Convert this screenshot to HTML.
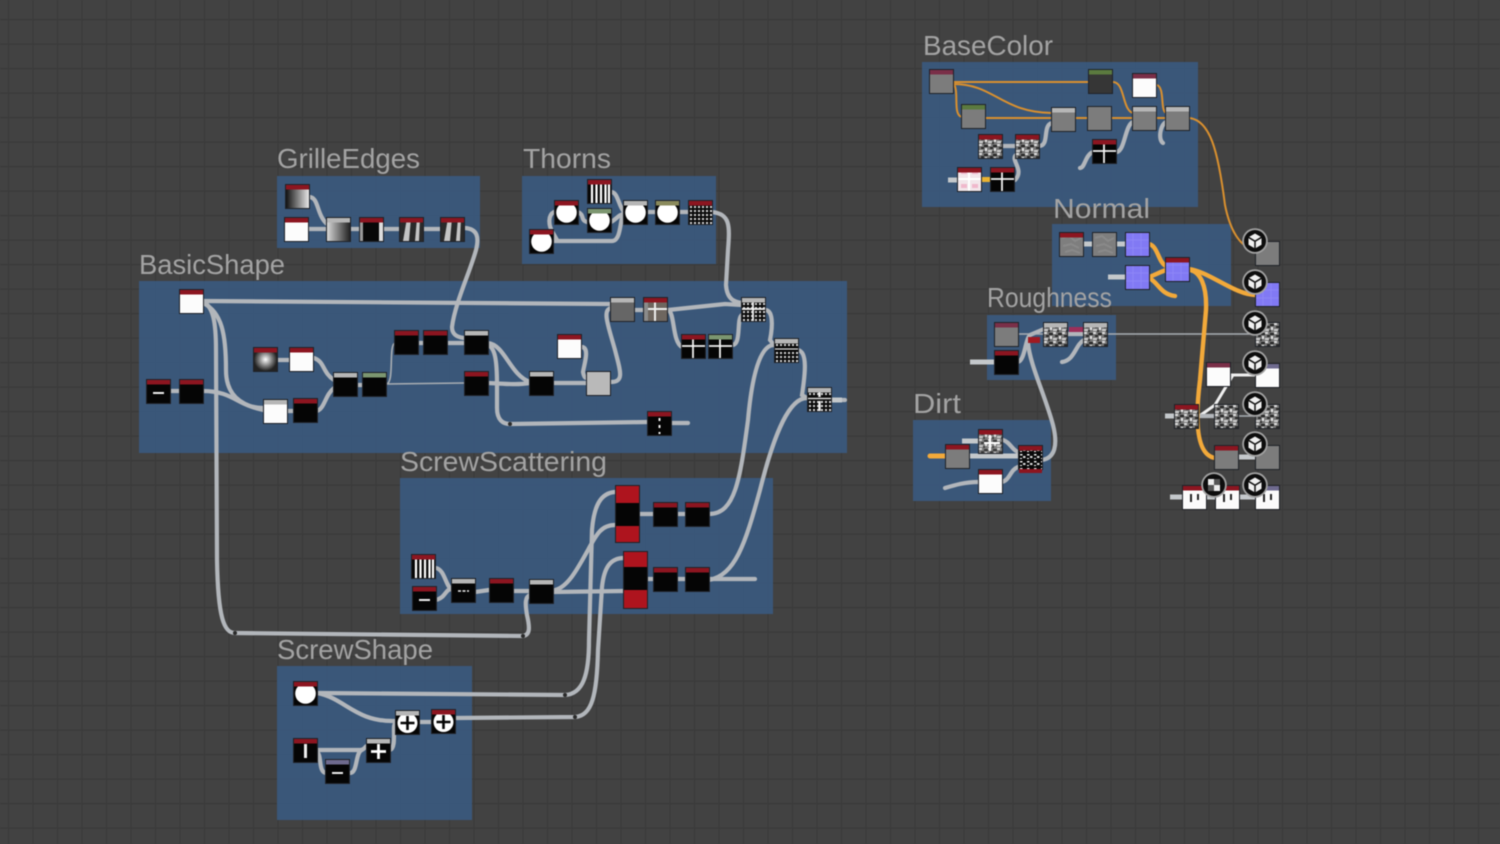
<!DOCTYPE html>
<html><head><meta charset="utf-8"><title>Node graph</title>
<style>
html,body{margin:0;padding:0;background:#424242;width:1500px;height:844px;overflow:hidden}
svg{display:block;filter:blur(.6px)}
text{font-family:"Liberation Sans",sans-serif;font-size:28px;fill:#a3a3a3}
.w{fill:none;stroke:#b2b6bb;stroke-width:4.2;stroke-linecap:round}
.t{fill:none;stroke:#a9aeb3;stroke-width:1.6}
.s{fill:none;stroke:#c4c8cb;stroke-width:5}
.o{fill:none;stroke:#d9902f;stroke-width:2}
.y{fill:none;stroke:#f2a93a;stroke-width:4.4;stroke-linecap:round}
.ww{fill:none;stroke:#f0f0f0;stroke-width:3}
</style></head><body>
<svg width="1500" height="844" viewBox="0 0 1500 844" xmlns="http://www.w3.org/2000/svg">
<defs>
<pattern id="grid" width="24.5" height="24.5" patternUnits="userSpaceOnUse" x="8" y="19"><path d="M0 0V24.5M0 0H24.5" stroke="#3a3a3a" stroke-width="2.4" fill="none"/></pattern>
<linearGradient id="gh"><stop offset="0" stop-color="#111"/><stop offset="1" stop-color="#e8e8e8"/></linearGradient>
<linearGradient id="gr"><stop offset="0" stop-color="#d8d8d8"/><stop offset="1" stop-color="#222"/></linearGradient>
<radialGradient id="rg"><stop offset="0" stop-color="#fff"/><stop offset=".6" stop-color="#777"/><stop offset="1" stop-color="#222"/></radialGradient>
<pattern id="nz" width="9" height="9" patternUnits="userSpaceOnUse"><rect width="9" height="9" fill="#777"/><rect x="0" y="0" width="3" height="2" fill="#ddd"/><rect x="5" y="1" width="4" height="2" fill="#222"/><rect x="2" y="3" width="3" height="2" fill="#2a2a2a"/><rect x="6" y="4" width="2" height="3" fill="#e8e8e8"/><rect x="0" y="6" width="4" height="2" fill="#ccc"/><rect x="4" y="7" width="2" height="2" fill="#333"/></pattern>
<pattern id="nk" width="7" height="7" patternUnits="userSpaceOnUse"><rect width="7" height="7" fill="#080808"/><rect x="1" y="1" width="2.500" height="1.500" fill="#eee"/><rect x="4" y="3" width="2.500" height="2" fill="#ddd"/><rect x="1" y="5" width="2" height="1" fill="#fff"/></pattern>
<pattern id="dt" width="4" height="4" patternUnits="userSpaceOnUse"><rect width="4" height="4" fill="#0a0a0a"/><rect x="1" y="1" width="2" height="2" fill="#d5d5d5"/></pattern>

<rect id="frame" x="-1" y="-1" width="25" height="25" fill="#1f2228"/>
<g id="k"><use href="#frame"/><rect width="23" height="23" fill="#050505"/></g>
<g id="wh"><use href="#frame"/><rect width="23" height="23" fill="#fcfcfc"/></g>
<g id="gy"><use href="#frame"/><rect width="23" height="23" fill="#7c7c7c"/></g>
<g id="dk"><use href="#frame"/><rect width="23" height="23" fill="#363636"/></g>
<g id="mg"><use href="#frame"/><rect width="23" height="23" fill="#666"/></g>
<g id="lg"><use href="#frame"/><rect width="23" height="23" fill="#b9b9b9"/></g>
<g id="pu"><use href="#frame"/><rect width="23" height="23" fill="#8179f4"/><path d="M7 0V23M15 0V23M0 7H23M0 15H23" stroke="#8d86f6" stroke-width="1"/></g>
<g id="gh1"><use href="#frame"/><rect width="23" height="23" fill="url(#gh)"/></g>
<g id="gr1"><use href="#frame"/><rect width="23" height="23" fill="url(#gr)"/></g>
<g id="ra"><use href="#frame"/><rect width="23" height="23" fill="url(#rg)"/></g>
<g id="hb"><use href="#frame"/><rect width="23" height="23" fill="#080808"/><rect x="19" y="0" width="4" height="23" fill="#ddd"/><rect width="3" height="23" fill="#999"/></g>
<g id="sl"><use href="#frame"/><rect width="23" height="23" fill="#2a2a2a"/><path d="M3 23L7 0H11L9 23ZM15 23L17 0H20L19 23Z" fill="#c4c4c4"/></g>
<g id="st"><use href="#frame"/><rect width="23" height="23" fill="#050505"/><path d="M4 0V23M8.500 0V23M13 0V23M17.500 0V23M21 0V23" stroke="#fff" stroke-width="2.200"/></g>
<g id="ci"><use href="#frame"/><rect width="23" height="23" fill="#050505"/><circle cx="11.500" cy="11.500" r="10.300" fill="#fff"/></g>
<g id="da"><use href="#frame"/><rect width="23" height="23" fill="#050505"/><rect x="6" y="12" width="11" height="2" fill="#eee"/></g>
<g id="dd"><use href="#frame"/><rect width="23" height="23" fill="#050505"/><path d="M6 12H17" stroke="#eee" stroke-width="1.600" stroke-dasharray="3 1.500"/></g>
<g id="vb"><use href="#frame"/><rect width="23" height="23" fill="#050505"/><rect x="10" y="5" width="3" height="14" fill="#eee"/></g>
<g id="vd"><use href="#frame"/><rect width="23" height="23" fill="#050505"/><path d="M11.500 6V22" stroke="#eee" stroke-width="2" stroke-dasharray="3 4"/></g>
<g id="pl"><use href="#frame"/><rect width="23" height="23" fill="#050505"/><path d="M11.500 5V20M4 12.500H19" stroke="#fff" stroke-width="2.800"/></g>
<g id="cp"><use href="#frame"/><rect width="23" height="23" fill="#050505"/><circle cx="11.500" cy="12" r="10" fill="#fff"/><path d="M11.500 5V19M4.500 12H18.500" stroke="#050505" stroke-width="2.600"/></g>
<g id="cr"><use href="#frame"/><rect width="23" height="23" fill="#050505"/><path d="M11 0V23M0 11H23" stroke="#f2f2f2" stroke-width="1.800"/></g>
<g id="crb"><use href="#frame"/><rect width="23" height="23" fill="#6e665f"/><path d="M11 0V23M0 11H23" stroke="#eee" stroke-width="2"/><rect x="0" y="0" width="4" height="23" fill="#8b8b8b"/></g>
<g id="cpk"><use href="#frame"/><rect width="23" height="23" fill="#f2e6ea"/><path d="M11 0V23M0 11H23" stroke="#fff" stroke-width="2"/><path d="M3 4H9M14 4H20M3 18H9M14 18H20" stroke="#f0b8cc" stroke-width="4"/></g>
<g id="dt1"><use href="#frame"/><rect width="23" height="23" fill="url(#dt)"/></g>
<g id="dc"><use href="#frame"/><rect width="23" height="23" fill="url(#dt)"/><path d="M11 0V23M0 11H23" stroke="#f2f2f2" stroke-width="1.800"/></g>
<g id="dh"><use href="#frame"/><rect width="23" height="23" fill="url(#dt)"/><rect y="7" width="23" height="6" fill="#070707"/><path d="M0 10H23" stroke="#ddd" stroke-width="1.200"/></g>
<g id="dx"><use href="#frame"/><rect width="23" height="23" fill="url(#dt)"/><path d="M11.500 0V23" stroke="#f2f2f2" stroke-width="2.400"/><rect y="9" width="23" height="4" fill="#111"/><path d="M0 10.500H23" stroke="#eee" stroke-width="1.200"/></g>
<g id="nz1"><use href="#frame"/><rect width="23" height="23" fill="url(#nz)"/></g>
<g id="ng"><use href="#frame"/><rect width="23" height="23" fill="#7e7e7e"/><path d="M2 5L9 3L15 8L21 5M3 13L11 11L19 15M5 19L12 17L20 20" stroke="#8a8a8a" stroke-width="2" fill="none"/></g>
<g id="nk1"><use href="#frame"/><rect width="23" height="27" fill="url(#nk)"/></g>
<g id="nw"><use href="#frame"/><rect width="23" height="23" fill="#a0a0a0"/><rect width="23" height="23" fill="url(#nz)" opacity=".85"/><path d="M11 5V21M5 13H21" stroke="#fff" stroke-width="2"/></g>
<g id="wv"><use href="#frame"/><rect width="23" height="23" fill="#fbfbfb"/><path d="M8 8V16M15 8V14" stroke="#222" stroke-width="2"/></g>

<rect id="hr" width="23" height="4.500" fill="#8c1520"/>
<rect id="hg" width="23" height="4.500" fill="#b6b6b6"/>
<rect id="ht" width="23" height="4.500" fill="#7c9670"/>
<rect id="hm" width="23" height="4.500" fill="#7a2f48"/>
<rect id="ho" width="23" height="4.500" fill="#8a8a5c"/>
<rect id="hp" width="23" height="4.500" fill="#6e6a8e"/>
<rect id="hd" width="23" height="4.500" fill="#5b7a3f"/>

<g id="cube"><circle r="12.800" fill="#a2a2a2"/><circle r="11" fill="#0d0d0d"/><path d="M0 -7.500L6.500 -3.700V3.700L0 7.500L-6.500 3.700V-3.700Z" fill="#f0f0f0"/><path d="M-6.500 -3.700L0 0.300L6.500 -3.700M0 0.300V7.500" fill="none" stroke="#111" stroke-width="1.500"/></g>
</defs>

<rect width="1500" height="844" fill="#424242"/>
<rect width="1500" height="844" fill="url(#grid)"/>

<!-- group frames -->
<g fill="#3a5a80" opacity=".9">
<rect x="277" y="176" width="203" height="72"/>
<rect x="522" y="176" width="194" height="88"/>
<rect x="139" y="281" width="708" height="172"/>
<rect x="400" y="478" width="373" height="136"/>
<rect x="277" y="666" width="195" height="154"/>
<rect x="922" y="62" width="276" height="145"/>
<rect x="1052" y="224" width="179" height="82"/>
<rect x="987" y="315" width="129" height="65"/>
<rect x="913" y="420" width="138" height="81"/>
</g>

<text x="277" y="168" textLength="143" lengthAdjust="spacingAndGlyphs">GrilleEdges</text>
<text x="523" y="168" textLength="88" lengthAdjust="spacingAndGlyphs">Thorns</text>
<text x="139" y="274" textLength="146" lengthAdjust="spacingAndGlyphs">BasicShape</text>
<text x="400" y="471" textLength="207" lengthAdjust="spacingAndGlyphs">ScrewScattering</text>
<text x="277" y="659" textLength="156" lengthAdjust="spacingAndGlyphs">ScrewShape</text>
<text x="923" y="55" textLength="130" lengthAdjust="spacingAndGlyphs">BaseColor</text>
<text x="1053" y="218" textLength="97" lengthAdjust="spacingAndGlyphs">Normal</text>
<text x="987" y="307" textLength="125" lengthAdjust="spacingAndGlyphs">Roughness</text>
<text x="913" y="413" textLength="48" lengthAdjust="spacingAndGlyphs">Dirt</text>

<!-- wires: left graph -->
<g class="w">
<path d="M309 197C319 197 316 214 327 224M308 229H327M350 229H359M383 229H399M423 229H440"/>
<path d="M465 228C478 229 479 238 476 250C470 272 455 303 452 327C452 334 456 337 464 338"/>
<path d="M203 301L611 304"/>
<path d="M203 302C213 306 216 322 216 350L217 560C218 618 224 633 235 633L523 636C530 635 530 628 527 615C525 603 525 597 530 595"/>
<path d="M203 303C222 312 226 335 226 370C226 395 240 405 263 410"/>
<path d="M203 391C235 391 238 408 264 408M170 391H179M277 360H290"/>
<path d="M314 358C325 362 322 372 334 380M287 411H293M317 411C325 408 325 395 334 388M358 385H363"/>
<path d="M419 343H424M447 343H464"/>
<path d="M488 343C505 345 510 375 530 382"/>
<path d="M488 345C495 348 497 360 497 385V408C497 420 503 424 510 424L648 422"/>
<path d="M488 383C510 384 515 385 530 383M553 383H587"/>
<path d="M582 347C590 348 584 365 583 372C584 377 585 378 587 378"/>
<path d="M611 382C625 382 620 370 615 350C608 325 602 310 611 308M635 310H644"/>
<path d="M668 310L725 304L742 305"/>
<path d="M668 310C675 312 672 342 682 347"/>
<path d="M732 345C742 345 736 318 742 315"/>
<path d="M765 310C773 310 773 325 770 340L774 345"/>
<path d="M712 212C730 214 730 225 728 250L726 285C727 300 735 302 742 303"/>
<path d="M798 350C808 352 805 375 802 395L807 398M831 400H845M672 423H688"/>
<path d="M709 514C735 514 740 480 748 420C752 375 760 345 774 345"/>
<path d="M709 580C735 575 745 545 760 490C775 430 790 398 807 398"/>
<path d="M709 579H755"/>
<path d="M611 192C618 192 618 205 624 212M578 212C585 215 580 220 587 222M611 222C618 218 618 215 624 214"/>
<path d="M553 241H612C620 241 620 225 622 218M554 212C548 215 548 225 553 233L557 240M647 212H656M679 212H688"/>
<path d="M436 568C445 570 445 585 452 590M436 600C445 598 445 590 452 588M475 592L489 590M513 591H530"/>
<path d="M553 592L624 591"/>
<path d="M555 590C568 587 578 568 588 550C597 533 602 525 615 525"/>
<path d="M317 693L565 695C583 694 589 675 589 640L592 530C594 505 601 493 615 492"/>
<path d="M455 718L575 717C592 716 597 695 598 650L602 587C604 568 610 558 624 558"/>
<path d="M640 514H653M677 514H685M647 579H653M677 579H686"/>
<path d="M317 693C345 698 355 722 395 721M419 722H432"/>
<path d="M317 750H360C365 750 365 746 367 746M317 752C322 755 318 772 326 773M350 773C358 773 355 752 362 750M390 750C397 748 392 725 395 724"/>
</g>
<path class="t" d="M386 384L464 383M386 384C395 384 388 345 395 343"/>
<g fill="#2a2a2a"><circle cx="510" cy="424" r="2"/><circle cx="235" cy="633" r="2"/><circle cx="523" cy="636" r="2"/><circle cx="565" cy="695" r="2"/><circle cx="575" cy="717" r="2"/></g>

<!-- right wires, gray -->
<g class="w">
<path d="M1002 146H1016M1039 146C1050 146 1042 125 1052 123M1015 180C1025 170 1010 160 1016 155"/>
<path d="M1117 152C1125 150 1125 125 1133 122M1093 152C1085 155 1085 168 1080 168M1166 122C1160 125 1158 140 1163 143"/>
<path d="M1018 362C1025 360 1025 340 1030 335L1044 329"/>
<path d="M1028 343C1030 365 1045 395 1053 425C1058 445 1055 458 1042 460"/>
<path d="M1084 340C1075 345 1075 360 1062 362M1003 440C1010 442 1012 450 1018 452M1002 482C1010 480 1010 470 1018 467M945 488C955 485 965 482 978 482M1067 334H1084"/>
</g>
<g class="t">
<path d="M1018 334H1044M1107 334H1256M1238 416H1256"/>
</g>
<g class="s">
<path d="M970 456H1018M962 441H978M970 362H995M948 180H958M1083 244H1093M1115 244H1126M1108 277H1126M1238 457H1256M1239 497H1256M1206 497H1216M1165 416H1175M1170 497H1182M831 400H842"/>
</g>
<path class="ww" d="M1230 375H1256M1233 375L1215 405L1198 417"/>
<path class="w" d="M1198 416H1215"/>

<!-- orange wires -->
<g class="o">
<path d="M953 82H1088M953 84C995 84 1000 112 1052 113M953 83C960 90 952 115 962 117"/>
<path d="M985 118H1052M1076 118H1087M1112 118H1133M1156 118H1166"/>
<path d="M1113 82C1125 82 1122 110 1133 113M1157 85C1165 88 1160 110 1166 113"/>
<path d="M1189 118C1210 120 1218 150 1225 205C1230 230 1240 248 1256 250"/>
</g>
<rect x="982" y="177" width="9" height="5" fill="#eab332"/>
<g class="y">
<path d="M1149 244C1158 246 1158 262 1166 266M1149 277C1155 275 1160 272 1166 270M1149 278C1158 282 1160 294 1175 296"/>
<path d="M1189 269C1210 272 1235 295 1256 295"/>
<path d="M1190 270C1200 272 1207 285 1206 310L1200 380C1195 420 1196 455 1215 458"/>
<path d="M930 456H946" stroke-width="5"/>
</g>

<!-- nodes: GrilleEdges -->
<use href="#gh1" x="286" y="185"/><use href="#hr" x="286" y="185"/>
<use href="#wh" x="285" y="218"/><use href="#hr" x="285" y="218"/>
<use href="#gr1" x="327" y="218"/><use href="#hg" x="327" y="218"/>
<use href="#hb" x="360" y="218"/><use href="#hr" x="360" y="218"/>
<use href="#sl" x="400" y="218"/><use href="#hr" x="400" y="218"/>
<use href="#sl" x="441" y="218"/><use href="#hr" x="441" y="218"/>
<!-- Thorns -->
<use href="#st" x="588" y="180"/><use href="#hr" x="588" y="180"/>
<use href="#ci" x="555" y="201"/><use href="#hr" x="555" y="201"/>
<use href="#ci" x="588" y="209"/><use href="#ht" x="588" y="209"/>
<use href="#ci" x="530" y="230"/><use href="#hr" x="530" y="230"/>
<use href="#ci" x="624" y="201"/><use href="#hg" x="624" y="201"/>
<use href="#ci" x="656" y="201"/><use href="#ho" x="656" y="201"/>
<use href="#dt1" x="689" y="201"/><use href="#hr" x="689" y="201"/>
<!-- BasicShape -->
<use href="#wh" x="180" y="290"/><use href="#hr" x="180" y="290"/>
<use href="#ra" x="254" y="348"/><use href="#hr" x="254" y="348"/>
<use href="#wh" x="290" y="348"/><use href="#hr" x="290" y="348"/>
<use href="#da" x="147" y="380"/><use href="#hr" x="147" y="380"/>
<use href="#k" x="180" y="380"/><use href="#hr" x="180" y="380"/>
<use href="#wh" x="264" y="400"/><use href="#hg" x="264" y="400"/>
<use href="#k" x="294" y="399"/><use href="#hr" x="294" y="399"/>
<use href="#k" x="334" y="373"/><use href="#hg" x="334" y="373"/>
<use href="#k" x="363" y="373"/><use href="#ht" x="363" y="373"/>
<use href="#k" x="395" y="331"/><use href="#hr" x="395" y="331"/>
<use href="#k" x="424" y="331"/><use href="#hr" x="424" y="331"/>
<use href="#k" x="465" y="331"/><use href="#hg" x="465" y="331"/>
<use href="#k" x="465" y="372"/><use href="#hr" x="465" y="372"/>
<use href="#wh" x="558" y="335"/><use href="#hr" x="558" y="335"/>
<use href="#k" x="530" y="372"/><use href="#hg" x="530" y="372"/>
<use href="#lg" x="587" y="372"/>
<use href="#mg" x="611" y="298"/><use href="#hg" x="611" y="298"/>
<use href="#crb" x="644" y="298"/><use href="#hr" x="644" y="298"/>
<use href="#cr" x="682" y="335"/><use href="#hr" x="682" y="335"/>
<use href="#cr" x="709" y="335"/><use href="#ht" x="709" y="335"/>
<use href="#dc" x="742" y="298"/><use href="#hg" x="742" y="298"/>
<use href="#dh" x="775" y="339"/><use href="#hg" x="775" y="339"/>
<use href="#dx" x="808" y="388"/><use href="#hg" x="808" y="388"/>
<use href="#vd" x="648" y="412"/><use href="#hr" x="648" y="412"/>
<!-- ScrewScattering -->
<rect x="615" y="485" width="25" height="58" fill="#1f2228"/><rect x="616" y="486" width="23" height="56" fill="#ae141e"/><rect x="616" y="503" width="23" height="23" fill="#050505"/>
<rect x="623" y="551" width="25" height="58" fill="#1f2228"/><rect x="624" y="552" width="23" height="56" fill="#ae141e"/><rect x="624" y="567" width="23" height="23" fill="#050505"/>
<use href="#k" x="654" y="503"/><use href="#hr" x="654" y="503"/>
<use href="#k" x="686" y="503"/><use href="#hr" x="686" y="503"/>
<use href="#k" x="654" y="568"/><use href="#hr" x="654" y="568"/>
<use href="#k" x="686" y="568"/><use href="#hr" x="686" y="568"/>
<use href="#st" x="412" y="555"/><use href="#hr" x="412" y="555"/>
<use href="#da" x="413" y="587"/><use href="#hr" x="413" y="587"/>
<use href="#dd" x="452" y="579"/><use href="#hg" x="452" y="579"/>
<use href="#k" x="490" y="579"/><use href="#hr" x="490" y="579"/>
<use href="#k" x="530" y="580"/><use href="#hg" x="530" y="580"/>
<!-- ScrewShape -->
<use href="#ci" x="294" y="682"/><use href="#hr" x="294" y="682"/>
<use href="#cp" x="396" y="711"/><use href="#hg" x="396" y="711"/>
<use href="#cp" x="432" y="710"/><use href="#hr" x="432" y="710"/>
<use href="#vb" x="294" y="739"/><use href="#hr" x="294" y="739"/>
<use href="#pl" x="367" y="739"/><use href="#hg" x="367" y="739"/>
<use href="#da" x="326" y="760"/><use href="#hp" x="326" y="760"/>
<!-- BaseColor -->
<use href="#gy" x="930" y="70"/><use href="#hm" x="930" y="70"/>
<use href="#dk" x="1089" y="70"/><use href="#hd" x="1089" y="70"/>
<use href="#wh" x="1133" y="74"/><use href="#hm" x="1133" y="74"/>
<use href="#gy" x="962" y="105"/><use href="#hd" x="962" y="105"/>
<use href="#gy" x="1052" y="108"/><use href="#hg" x="1052" y="108"/>
<use href="#gy" x="1088" y="107"/>
<use href="#gy" x="1133" y="107"/><use href="#hg" x="1133" y="107"/>
<use href="#gy" x="1166" y="107"/><use href="#hg" x="1166" y="107"/>
<use href="#nz1" x="979" y="135"/><use href="#hr" x="979" y="135"/>
<use href="#nz1" x="1016" y="135"/><use href="#hr" x="1016" y="135"/>
<use href="#cr" x="1093" y="140"/><use href="#hr" x="1093" y="140"/>
<use href="#cpk" x="958" y="168"/><use href="#hr" x="958" y="168"/>
<use href="#cr" x="991" y="168"/><use href="#hr" x="991" y="168"/>
<!-- Normal -->
<use href="#ng" x="1060" y="233"/><use href="#hr" x="1060" y="233"/>
<use href="#ng" x="1093" y="233"/>
<use href="#pu" x="1126" y="233"/>
<use href="#pu" x="1126" y="266"/>
<use href="#pu" x="1166" y="258"/><use href="#hr" x="1166" y="258"/>
<!-- Roughness -->
<use href="#gy" x="995" y="323"/><use href="#hm" x="995" y="323"/>
<use href="#k" x="995" y="351"/><use href="#hr" x="995" y="351"/>
<use href="#nz1" x="1044" y="323"/><use href="#hg" x="1044" y="323"/>
<use href="#nz1" x="1084" y="323"/><use href="#hg" x="1084" y="323"/>
<rect x="1028" y="337" width="12" height="6" fill="#a01a22"/>
<rect x="1069" y="327" width="14" height="5" fill="#9c2f5a"/>
<!-- Dirt -->
<use href="#nw" x="979" y="430"/><use href="#hr" x="979" y="430"/>
<use href="#gy" x="946" y="445"/><use href="#hr" x="946" y="445"/>
<use href="#nk1" x="1019" y="446"/><use href="#hr" x="1019" y="446"/><rect x="1019" y="469" width="23" height="4" fill="#8c1520"/>
<use href="#wh" x="979" y="470"/><use href="#hr" x="979" y="470"/>
<!-- outputs -->
<use href="#gy" x="1256" y="242"/><use href="#pu" x="1256" y="283"/>
<use href="#nz1" x="1256" y="323"/><use href="#gy" x="1256" y="446"/>
<use href="#wh" x="1207" y="363"/><use href="#hm" x="1207" y="363"/>
<use href="#wh" x="1256" y="364"/><use href="#hp" x="1256" y="364"/>
<use href="#nz1" x="1175" y="405"/><use href="#hr" x="1175" y="405"/>
<use href="#nz1" x="1215" y="405"/>
<use href="#nz1" x="1256" y="405"/>
<use href="#gy" x="1215" y="446"/><use href="#hr" x="1215" y="446"/>
<use href="#wv" x="1183" y="486"/><use href="#hr" x="1183" y="486"/>
<use href="#wv" x="1216" y="486"/><use href="#hr" x="1216" y="486"/>
<use href="#wv" x="1256" y="486"/><use href="#hp" x="1256" y="486"/>
<!-- cube badges -->
<use href="#cube" x="1255" y="241"/><use href="#cube" x="1255" y="282"/><use href="#cube" x="1255" y="323"/>
<use href="#cube" x="1255" y="363"/><use href="#cube" x="1255" y="404"/><use href="#cube" x="1255" y="444"/><use href="#cube" x="1255" y="485"/>
<g transform="translate(1214 485)"><circle r="12.800" fill="#a2a2a2"/><circle r="11" fill="#0d0d0d"/><path d="M-6 -6H0V0H-6ZM0 0H6V6H0Z" fill="#eee" /><path d="M0 -6H6V0H0ZM-6 0H0V6H-6Z" fill="#555"/></g>
</svg>
</body></html>
